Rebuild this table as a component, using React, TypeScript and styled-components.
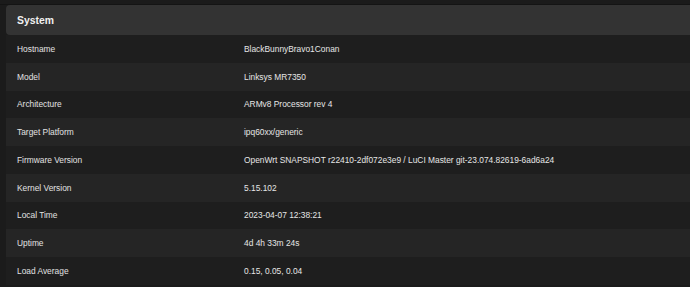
import React from "react";
import styled, { createGlobalStyle } from "styled-components";

const GlobalStyle = createGlobalStyle`
  html, body {
    margin: 0;
    padding: 0;
    background: #1b1b1b;
  }
  body {
    font-family: "Liberation Sans", Arial, sans-serif;
    overflow: hidden;
  }
`;

const Page = styled.div`
  box-sizing: border-box;
  height: 287px;
  padding-top: 4px;
  background: #1b1b1b;
`;

const TopLine = styled.div`
  height: 1px;
  background: #141414;
`;

const Section = styled.div`
  margin-left: 6px;
`;

const Header = styled.div`
  box-sizing: border-box;
  height: 30px;
  display: flex;
  align-items: center;
  padding-left: 11px;
  background: #333333;
  border-radius: 4px 0 0 4px;
  color: #f0f0f0;
  font-size: 10.4px;
  font-weight: bold;
`;

const Table = styled.div`
  display: flex;
  flex-direction: column;
`;

const Row = styled.div<{ $alt: boolean }>`
  box-sizing: border-box;
  height: 27.75px;
  display: grid;
  grid-template-columns: 227px 1fr;
  align-items: center;
  padding-left: 11px;
  background: ${(p) => (p.$alt ? "#252525" : "#1e1e1e")};
  font-size: 8.4px;
  color: #e2e2e2;
`;

const Label = styled.div`
  white-space: nowrap;
`;

const Value = styled.div`
  white-space: nowrap;
  color: #e6e6e6;
`;

const rows: [string, string][] = [
  ["Hostname", "BlackBunnyBravo1Conan"],
  ["Model", "Linksys MR7350"],
  ["Architecture", "ARMv8 Processor rev 4"],
  ["Target Platform", "ipq60xx/generic"],
  ["Firmware Version", "OpenWrt SNAPSHOT r22410-2df072e3e9 / LuCI Master git-23.074.82619-6ad6a24"],
  ["Kernel Version", "5.15.102"],
  ["Local Time", "2023-04-07 12:38:21"],
  ["Uptime", "4d 4h 33m 24s"],
  ["Load Average", "0.15, 0.05, 0.04"],
];

export default function App() {
  return (
    <>
      <GlobalStyle />
      <Page>
        <TopLine />
        <Section>
          <Header>System</Header>
          <Table>
            {rows.map(([label, value], i) => (
              <Row key={label} $alt={i % 2 === 1}>
                <Label>{label}</Label>
                <Value>{value}</Value>
              </Row>
            ))}
          </Table>
        </Section>
      </Page>
    </>
  );
}
